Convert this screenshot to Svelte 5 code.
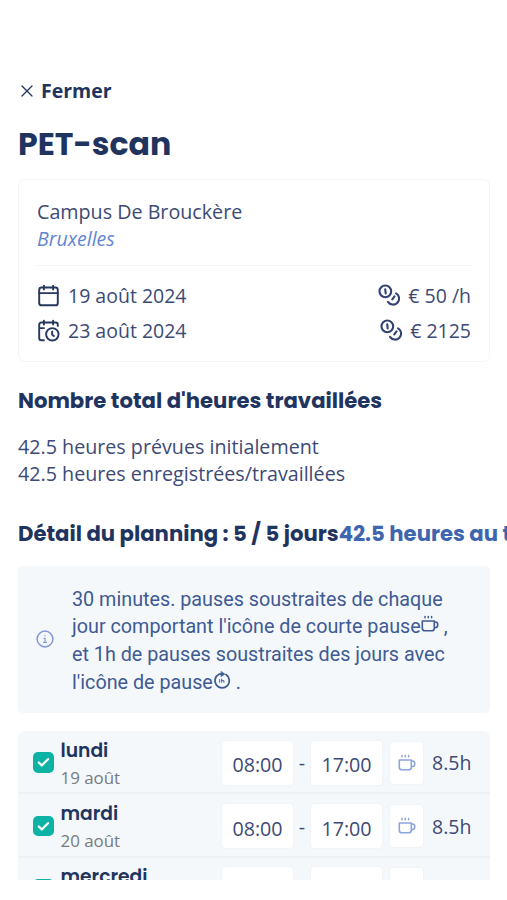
<script lang="ts">
  type Day = { name: string; date: string; start: string; end: string; hours: string };

  let days: Day[] = $state([
    { name: "lundi", date: "19 août", start: "08:00", end: "17:00", hours: "8.5h" },
    { name: "mardi", date: "20 août", start: "08:00", end: "17:00", hours: "8.5h" },
    { name: "mercredi", date: "21 août", start: "08:00", end: "17:00", hours: "8.5h" }
  ]);
</script>

{#snippet coins()}
  <svg class="coins" viewBox="0 0 24 24" aria-hidden="true">
    <circle cx="8" cy="8" r="6.4" />
    <path d="M7.9 5.8l.5 4.4M19.8 10.2a6.6 6.6 0 1 1-8.9 9.3M18 13.6l-2.4 3.2" />
  </svg>
{/snippet}

{#snippet cup()}
  <svg class="cup" viewBox="0 0 18 18" aria-hidden="true">
    <path d="M1.3 6h12v7.2a2.6 2.6 0 0 1-2.6 2.6H3.9a2.6 2.6 0 0 1-2.6-2.6zM13.5 7h1.2a2 2 0 0 1 2 2v1a2.8 2.8 0 0 1-2.8 2.8h-.4" />
    <path class="steam" d="M4 1.6v1.2M7.3 1.6v1.2M10.6 1.6v1.2" />
  </svg>
{/snippet}

<main class="screen">
  <button type="button" class="close">
    <svg viewBox="0 0 14 14" aria-hidden="true"><path d="M2 2l10 10M12 2L2 12" /></svg>
    Fermer
  </button>

  <h1>PET-scan</h1>

  <section class="card">
    <p class="campus">Campus De Brouckère</p>
    <p class="city">Bruxelles</p>
    <div class="facts">
      <div class="fact">
        <svg class="calendar" viewBox="0 0 24 24" aria-hidden="true">
          <rect x="2.3" y="3.7" width="19.4" height="18.5" rx="2.5" />
          <path d="M2.3 9.5h19.4M7.2 1.8v4M16.8 1.8v4" />
        </svg>
        <span>19 août 2024</span>
      </div>
      <div class="fact amount">{@render coins()}<span>€ 50 /h</span></div>
      <div class="fact">
        <svg class="calendar" viewBox="0 0 24 24" aria-hidden="true">
          <path d="M7.2 22.2H4.5a2.2 2.2 0 0 1-2.2-2.2V6a2.2 2.2 0 0 1 2.2-2.3h15a2.2 2.2 0 0 1 2.2 2.2v1.3M2.3 9.5h5M7.2 1.8v4M16.8 1.8v4" />
          <circle cx="16" cy="16" r="6.5" />
          <path d="M15.8 13v3.2l1.8 1.6" />
        </svg>
        <span>23 août 2024</span>
      </div>
      <div class="fact amount">{@render coins()}<span>€ 2125</span></div>
    </div>
  </section>

  <h2 class="total-title">Nombre total d'heures travaillées</h2>
  <div class="totals">
    <p>42.5 heures prévues initialement</p>
    <p>42.5 heures enregistrées/travaillées</p>
  </div>

  <h2 class="planning-title"><span>Détail du planning : 5 / 5 jours</span><span class="sum">42.5 heures au total</span></h2>

  <aside class="notice">
    <svg class="info" viewBox="0 0 18 18" aria-hidden="true">
      <circle cx="9" cy="9" r="7.9" />
      <path class="letter" d="M7.8 8.2h1.3v4.1M7.6 12.4h3M9 5.2v.6" />
    </svg>
    <p>
      30 minutes. pauses soustraites de chaque<br />
      jour comportant l'icône de courte pause{@render cup()} ,<br />
      et 1h de pauses soustraites des jours avec<br />
      l'icône de pause<svg class="timer" viewBox="0 0 18 18" aria-hidden="true">
        <path d="M6 3.2A7.2 7.2 0 1 0 13 3.6M6 3.1h3" />
        <path class="arrow" d="M8.2 .4l3.8 2.7-3.8 2.7z" />
        <path class="hour" d="M6.7 8.4v3M8.7 8v3.4M8.7 9.6h2.2v1.8" />
      </svg> .
    </p>
  </aside>

  <section class="days">
    {#each days as day}
      <div class="day">
        <span class="check">
          <svg viewBox="0 0 20 20" aria-hidden="true"><path d="M5.6 10.2l3 2.9 6-6.1" /></svg>
        </span>
        <div class="label">
          <h3>{day.name}</h3>
          <p>{day.date}</p>
        </div>
        <span class="time">{day.start}</span>
        <span class="dash">-</span>
        <span class="time">{day.end}</span>
        <span class="break">{@render cup()}</span>
        <span class="hours">{day.hours}</span>
      </div>
    {/each}
  </section>
</main>

<style>
  :global(body) {
    margin: 0;
    background: #fff;
  }

  .screen {
    box-sizing: border-box;
    width: 507px;
    height: 880px;
    padding: 77px 17px 0 18px;
    overflow: hidden;
    color: #3d4a75;
    font-family: "Open Sans", sans-serif;
    font-size: 19.7px;
    line-height: 27px;
  }

  h1,
  h2,
  h3,
  p {
    margin: 0;
  }

  h1,
  h2,
  h3 {
    color: #1f345f;
    font-family: Poppins, Inter, sans-serif;
    font-weight: 700;
    white-space: nowrap;
  }

  svg {
    flex: none;
    fill: none;
    stroke: currentColor;
    stroke-width: 2;
    stroke-linecap: round;
    stroke-linejoin: round;
  }

  .close {
    display: flex;
    align-items: center;
    gap: 7px;
    padding: 0 0 0 2px;
    border: 0;
    background: none;
    color: #1f345f;
    font: 700 19.5px/27px "Open Sans", sans-serif;
  }

  .close svg {
    width: 14px;
    height: 14px;
    stroke-width: 1.3;
  }

  h1 {
    margin-top: 20px;
    font-size: 31.6px;
    line-height: 40px;
  }

  .card {
    box-sizing: border-box;
    height: 183px;
    margin-top: 15px;
    padding: 18px 18px 0;
    border: 1.5px solid #f4f5f7;
    border-radius: 7px;
  }

  .city {
    color: #5f86cf;
    font-size: 19.5px;
    font-style: italic;
  }

  .facts {
    display: grid;
    grid-template-columns: auto auto;
    justify-content: space-between;
    row-gap: 7px;
    margin-top: 13px;
    padding-top: 15px;
    border-top: 1px solid #f2f3f5;
  }

  .fact {
    display: flex;
    align-items: center;
    gap: 8px;
    height: 28px;
    font-size: 19.5px;
  }

  .amount {
    justify-content: flex-end;
  }

  .calendar,
  .coins {
    width: 23px;
    height: 23px;
    color: #26375f;
  }

  .coins {
    width: 22px;
    height: 22px;
    color: #334272;
    stroke-width: 2.3;
  }

  h2 {
    font-size: 21.2px;
    line-height: 28px;
  }

  .total-title {
    margin-top: 25px;
  }

  .totals {
    margin-top: 18px;
  }

  .planning-title {
    margin-top: 33px;
  }

  .sum {
    color: #3e66b0;
  }

  .notice {
    box-sizing: border-box;
    display: flex;
    align-items: center;
    gap: 18px;
    height: 147px;
    margin-top: 18px;
    padding: 3px 18px 0;
    border-radius: 5px;
    background: #f4f8fb;
    color: #405a93;
    font-family: Roboto, sans-serif;
    font-size: 19.75px;
    line-height: 27.7px;
    white-space: nowrap;
  }

  .info {
    width: 18px;
    height: 18px;
    margin-top: -4px;
    color: #8298d5;
    stroke-width: 1.5;
  }

  .letter {
    stroke-width: 1.1;
  }

  .cup,
  .timer {
    width: 18px;
    height: 18px;
    stroke-width: 1.6;
  }

  .timer {
    stroke-width: 1.8;
  }

  .steam {
    stroke-width: 1.5;
  }

  .arrow {
    fill: currentColor;
    stroke-width: 0.5;
  }

  .hour {
    stroke-width: 0.9;
  }

  .days {
    margin-top: 18px;
    border-radius: 7px;
    background: #f4f8fb;
  }

  .day {
    box-sizing: border-box;
    display: flex;
    align-items: center;
    height: 63.4px;
    padding: 0 18px 0 15px;
    border-bottom: 2px solid #ebf1f5;
  }

  .check {
    display: flex;
    width: 20.5px;
    height: 20.5px;
    margin: 2px 7px 0 0;
    border-radius: 5px;
    background: #0cb3a5;
    color: #fff;
  }

  .check svg {
    width: 100%;
    stroke-width: 2.2;
  }

  .label {
    flex: 1;
    padding-top: 4px;
  }

  h3 {
    font-size: 18.7px;
    font-weight: 600;
    line-height: 27px;
  }

  .label p {
    color: #777b80;
    font-size: 16.9px;
  }

  .time,
  .break {
    box-sizing: border-box;
    display: flex;
    align-items: center;
    justify-content: center;
    width: 73px;
    height: 46px;
    padding-top: 4px;
    margin-top: 2px;
    border: 1px solid #f0f3f7;
    border-radius: 4px;
    background: #fff;
  }

  .dash {
    width: 16px;
    margin-top: 2px;
    text-align: center;
  }

  .break {
    width: 35px;
    height: 44px;
    margin-left: 6px;
    padding: 0;
    color: #8da4dc;
  }

  .hours {
    width: 40px;
    margin: 2px 0 0 8px;
    font-size: 19.5px;
  }
</style>
